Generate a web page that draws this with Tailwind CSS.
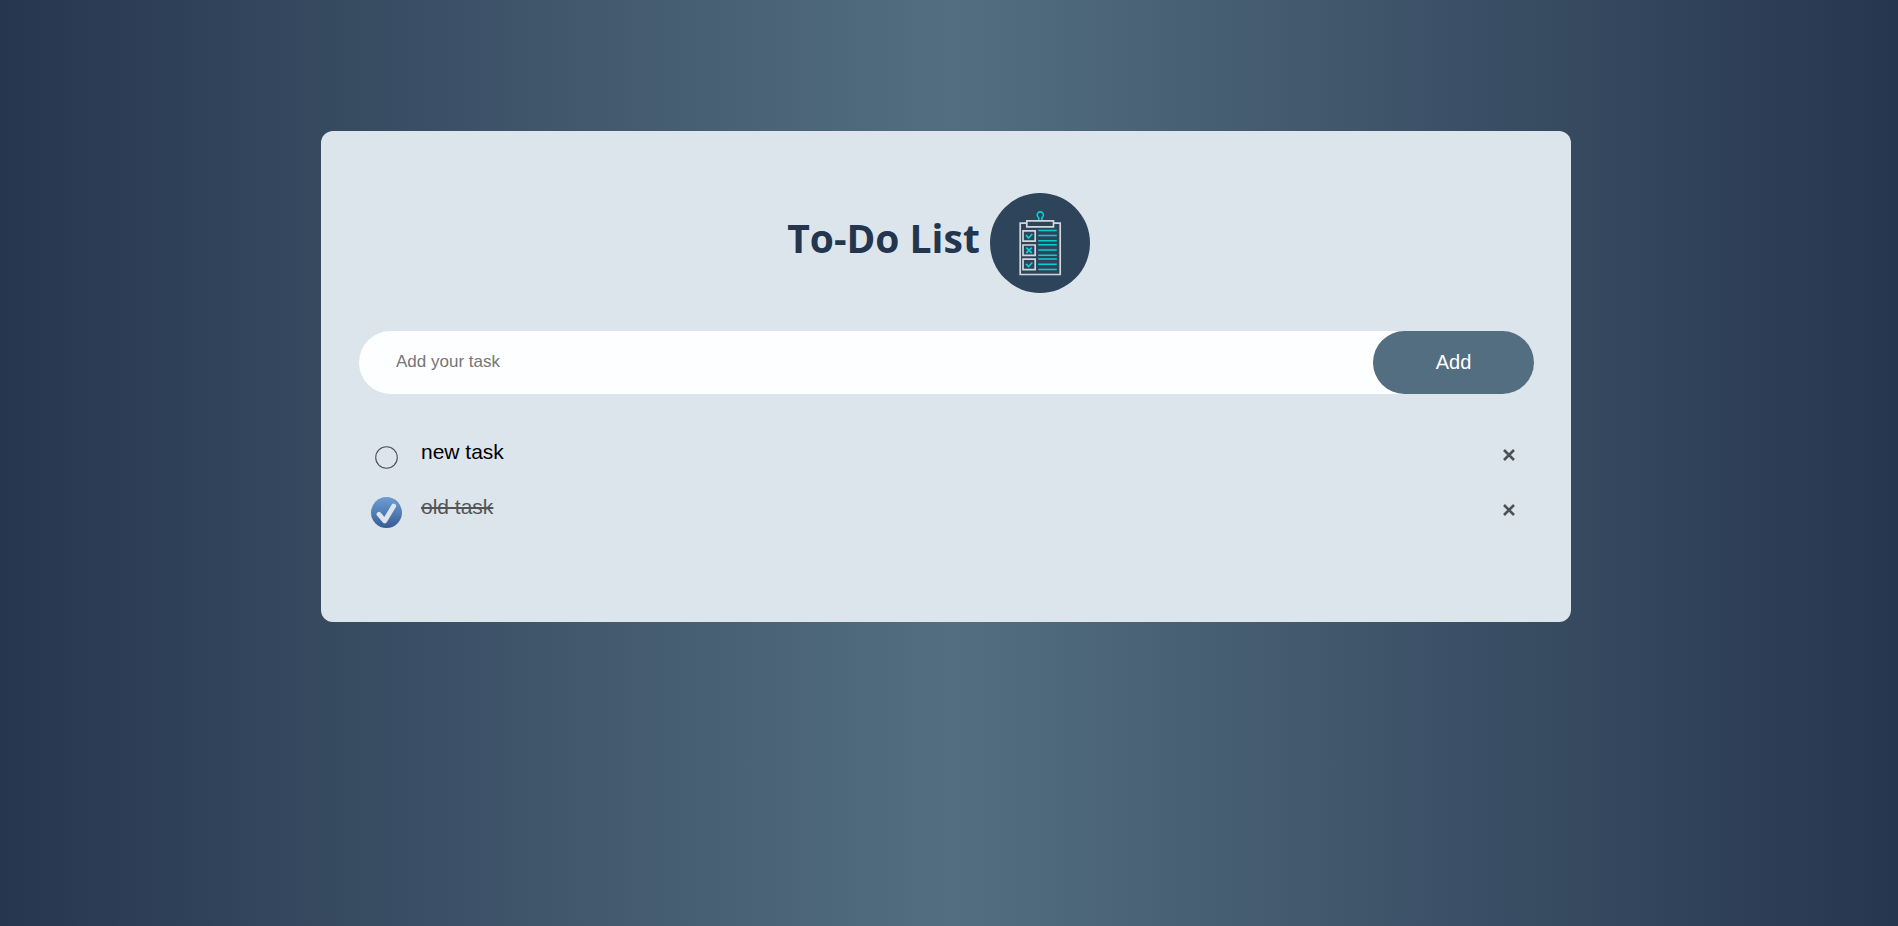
<!DOCTYPE html>
<html lang="en">
<head>
<meta charset="utf-8">
<meta name="viewport" content="width=device-width, initial-scale=1">
<title>To-Do List</title>
<script src="https://cdn.jsdelivr.net/npm/@tailwindcss/browser@4"></script>
</head>
<body class="min-h-screen bg-[linear-gradient(90deg,#26364e_0%,#536e81_50%,#26364e_100%)] pl-4 pr-[22px] pt-[131px] font-['Liberation_Sans',Arial,sans-serif]">
<main class="mx-auto max-w-[1250px] rounded-xl bg-[#dde5ec] pl-[38px] pr-[37px] pt-[62px] pb-[82px]">
  <header class="flex items-center justify-center gap-[10px] pr-4">
    <h1 class="pb-[10px] font-['Open_Sans','Noto_Sans',sans-serif] text-[39px] leading-[56px] font-bold text-[#24354e]">To-Do List</h1>
    <svg class="size-[100px] shrink-0" viewBox="0 0 100 100" fill="none" aria-hidden="true">
      <circle cx="50" cy="50" r="50" fill="#2e445b"/>
      <g stroke="#d1d7dc" stroke-width="1.7">
        <path d="M36.500 30.200H30.200V81.500H70.200V30.200H63.800"/>
        <path d="M36.800 27.800H63.500V33.800H36.800Z"/>
        <path d="M33 37.800H45.200V48.200H33ZM33 52H45.200V62.400H33ZM33 66.200H45.200V76.600H33Z"/>
      </g>
      <g stroke="#08d0d2" stroke-width="1.600">
        <path d="M48.700 27V24.600A3.100 3.100 0 1 1 51.900 24.600V27"/>
        <path stroke-width="1.800" d="M36 42.200L38.600 45L42.300 41M36.300 54.600L41.800 60M41.800 54.600L36.300 60M36 70.800L38.600 73.500L42.300 69.500"/>
        <path d="M48.200 37.500H66.800M48.200 42.500H66.800M48.200 47.800H66.800M48.200 51.700H66.800M48.200 57H66.800M48.200 62.300H66.800M48.200 66H66.800M48.200 71.300H66.800M48.200 76.500H66.800"/>
      </g>
    </svg>
  </header>
  <form class="mt-[38px] flex h-[63px] rounded-full bg-[#fdfeff]" onsubmit="return false">
    <input type="text" aria-label="Add your task" placeholder="Add your task" class="min-w-0 flex-1 bg-transparent pl-[37px] pb-[2px] text-[17px] text-black outline-none placeholder:text-[#757575]">
    <button type="submit" class="w-[161px] rounded-full bg-[#536d81] pb-[2px] text-xl text-white">Add</button>
  </form>
  <ul class="mt-[36px]">
    <li class="flex h-[55px] items-center pl-3 pr-[13px]">
      <input id="new-task" type="checkbox" class="peer sr-only">
      <label for="new-task" class="flex flex-1 items-center gap-[18px] text-[21px] leading-6 text-black">
        <svg class="size-8" viewBox="0 0 32 32" aria-hidden="true"><circle cx="15.500" cy="15.500" r="10.800" fill="none" stroke="#4b5057" stroke-width="1.100"/></svg>
        <span class="pb-3">new task</span>
      </label>
      <button type="button" aria-label="Delete new task" class="flex size-6 items-center justify-center pb-[6px]"><svg class="size-3" viewBox="0 0 12 12" fill="none" stroke="#4c5157" stroke-width="2.600" aria-hidden="true"><path d="M1 1L11 11M11 1L1 11"/></svg></button>
    </li>
    <li class="flex h-[55px] items-center pl-3 pr-[13px]">
      <input id="old-task" type="checkbox" checked class="peer sr-only">
      <label for="old-task" class="flex flex-1 items-center gap-[18px] text-[21px] leading-6 text-[#555]">
        <svg class="size-8" viewBox="0 0 32 32" aria-hidden="true">
          <defs><linearGradient id="tick-fill" x1="0" y1="0" x2="0" y2="1"><stop stop-color="#6c9dd2"/><stop offset=".5" stop-color="#527fb6"/><stop offset="1" stop-color="#385a93"/></linearGradient></defs>
          <circle cx="15.500" cy="15.500" r="15.500" fill="url(#tick-fill)"/>
          <path d="M8 17.300L13.700 24L22.700 9" fill="none" stroke="#dde5ec" stroke-width="4.800" stroke-linecap="round" stroke-linejoin="round"/>
        </svg>
        <span class="pb-3 line-through">old task</span>
      </label>
      <button type="button" aria-label="Delete old task" class="flex size-6 items-center justify-center pb-[6px]"><svg class="size-3" viewBox="0 0 12 12" fill="none" stroke="#4c5157" stroke-width="2.600" aria-hidden="true"><path d="M1 1L11 11M11 1L1 11"/></svg></button>
    </li>
  </ul>
</main>
</body>
</html>
